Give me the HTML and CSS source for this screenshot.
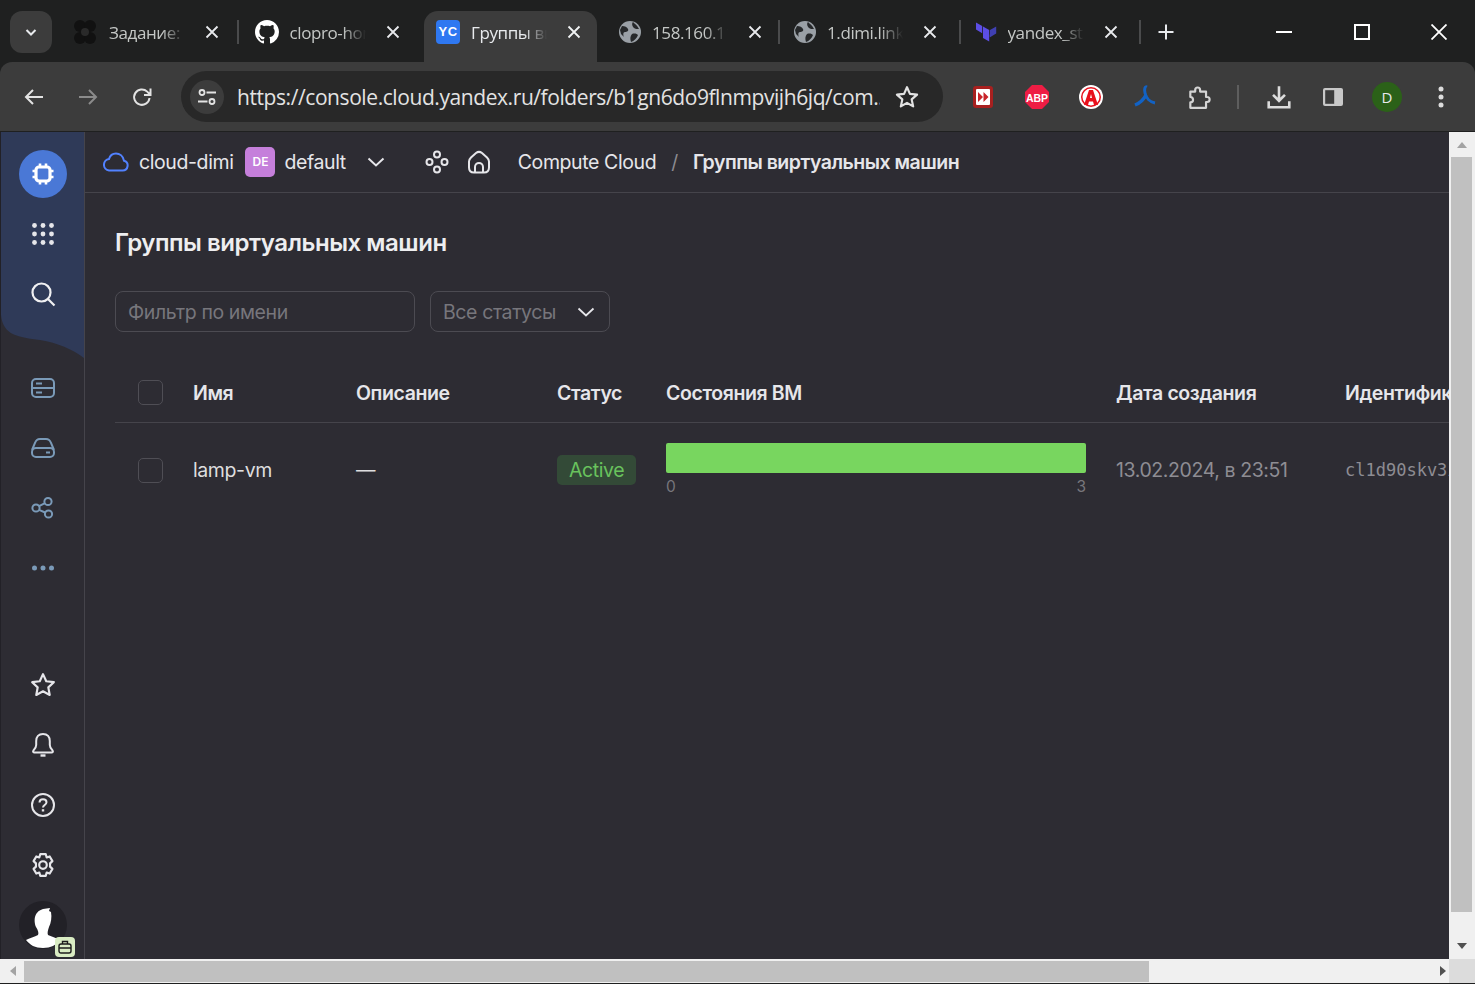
FILE: index.html
```html
<!DOCTYPE html>
<html lang="ru">
<head>
    <meta charset="UTF-8">
    <title>Группы виртуальных машин</title>
    <link rel="stylesheet" href="styles.css">
</head>
<body>
<div class="window">
    <!-- вкладки -->
    <div class="tabbar">
        <div class="tab-search">
            <svg width="14" height="14" viewBox="0 0 14 14"><path d="M2.5 5l4.5 4.5L11.500 5" fill="none" stroke="#e8eaed" stroke-width="2"/></svg>
        </div>
        <div class="tab">
            <svg class="favicon" width="26" height="26" viewBox="0 0 26 26" fill="#111"><circle cx="8" cy="7" r="6"/><circle cx="18" cy="7" r="6"/><circle cx="8" cy="19" r="6"/><circle cx="18" cy="19" r="6"/><circle cx="13" cy="13" r="4" fill="#2a2a2a"/></svg>
            <span class="tab-title">Задание: 1</span>
            <svg class="tab-close" width="14" height="14" viewBox="0 0 14 14"><path d="M1.500 1.500l11 11M12.500 1.500l-11 11" stroke="#e8eaed" stroke-width="1.800"/></svg>
        </div>
        <div class="tab sep">
            <svg class="favicon" width="24" height="24" viewBox="0 0 16 16"><path fill="#fff" d="M8 0C3.580 0 0 3.580 0 8c0 3.540 2.290 6.530 5.470 7.590.4.070.55-.17.55-.38 0-.19-.01-.82-.01-1.490-2.010.37-2.530-.49-2.690-.94-.09-.23-.48-.94-.82-1.130-.28-.15-.68-.52-.01-.53.63-.01 1.080.58 1.230.82.72 1.210 1.870.87 2.330.66.07-.52.28-.87.51-1.070-1.780-.2-3.640-.89-3.640-3.950 0-.87.31-1.590.82-2.150-.08-.2-.36-1.020.08-2.120 0 0 .67-.21 2.200.82.64-.18 1.320-.27 2-.27.68 0 1.360.09 2 .27 1.530-1.040 2.200-.82 2.200-.82.44 1.100.16 1.920.08 2.120.51.56.82 1.270.82 2.150 0 3.070-1.870 3.750-3.650 3.950.29.25.54.73.54 1.480 0 1.070-.01 1.930-.01 2.200 0 .21.15.46.55.38A8.013 8.013 0 0016 8c0-4.420-3.580-8-8-8z"/></svg>
            <span class="tab-title">clopro-hom</span>
            <svg class="tab-close" width="14" height="14" viewBox="0 0 14 14"><path d="M1.500 1.500l11 11M12.500 1.500l-11 11" stroke="#e8eaed" stroke-width="1.800"/></svg>
        </div>
        <div class="tab active">
            <span class="favicon yc-icon">YC</span>
            <span class="tab-title">Группы вир</span>
            <svg class="tab-close" width="14" height="14" viewBox="0 0 14 14"><path d="M1.500 1.500l11 11M12.500 1.500l-11 11" stroke="#f1f3f4" stroke-width="1.800"/></svg>
        </div>
        <div class="tab">
            <svg class="favicon" width="22" height="22" viewBox="0 0 22 22"><circle cx="11" cy="11" r="11" fill="#9aa0a6"/><path d="M3 5c3 0 5 1 6 3s-1 3-3 3-2 3-1 5l-3-3-1-4zM14 1c2 2 4 3 6 7-2 0-4 0-5-1s-3-4-1-6zM13 13c3-1 5 0 6 1-1 3-4 6-7 7-1-3-1-6 1-8z" fill="#26282a"/></svg>
            <span class="tab-title">158.160.118</span>
            <svg class="tab-close" width="14" height="14" viewBox="0 0 14 14"><path d="M1.500 1.500l11 11M12.500 1.500l-11 11" stroke="#e8eaed" stroke-width="1.800"/></svg>
        </div>
        <div class="tab">
            <svg class="favicon" width="22" height="22" viewBox="0 0 22 22"><circle cx="11" cy="11" r="11" fill="#9aa0a6"/><path d="M3 5c3 0 5 1 6 3s-1 3-3 3-2 3-1 5l-3-3-1-4zM14 1c2 2 4 3 6 7-2 0-4 0-5-1s-3-4-1-6zM13 13c3-1 5 0 6 1-1 3-4 6-7 7-1-3-1-6 1-8z" fill="#26282a"/></svg>
            <span class="tab-title">1.dimi.link</span>
            <svg class="tab-close" width="14" height="14" viewBox="0 0 14 14"><path d="M1.500 1.500l11 11M12.500 1.500l-11 11" stroke="#e8eaed" stroke-width="1.800"/></svg>
        </div>
        <div class="tab tab-last">
            <svg class="favicon" width="22" height="24" viewBox="0 0 22 24" fill="#5c4ee5"><path d="M8 6.500l6.200 3.600v7.100L8 13.600z"/><path d="M15 10.100v7.100l6.200-3.600V6.500z" fill="#4040b2"/><path d="M1 2.500v7.100l6.200 3.600V6.100zM8 18l6.200 3.600v-7.100L8 10.900z"/></svg>
            <span class="tab-title">yandex_sto</span>
            <svg class="tab-close" width="14" height="14" viewBox="0 0 14 14"><path d="M1.500 1.500l11 11M12.500 1.500l-11 11" stroke="#e8eaed" stroke-width="1.800"/></svg>
        </div>
        <div class="new-tab">
            <svg width="16" height="16" viewBox="0 0 16 16"><path d="M8 0.500v15M0.500 8h15" stroke="#e8eaed" stroke-width="2"/></svg>
        </div>
        <div class="win-controls">
            <svg width="16" height="16" viewBox="0 0 16 16"><path d="M0 8h16" stroke="#fff" stroke-width="2"/></svg>
            <svg width="16" height="16" viewBox="0 0 16 16"><rect x="1" y="1" width="14" height="14" fill="none" stroke="#fff" stroke-width="2"/></svg>
            <svg width="16" height="16" viewBox="0 0 16 16"><path d="M0.500 0.500l15 15M15.500 0.500l-15 15" stroke="#fff" stroke-width="1.800"/></svg>
        </div>
    </div>

    <!-- адресная строка -->
    <div class="toolbar">
        <div class="nav-btns">
            <svg width="24" height="24" viewBox="0 0 24 24"><path d="M21 12H4M11 5l-7 7 7 7" fill="none" stroke="#e3e3e3" stroke-width="2"/></svg>
            <svg width="24" height="24" viewBox="0 0 24 24"><path d="M3 12h17M13 5l7 7-7 7" fill="none" stroke="#8b8b8b" stroke-width="2"/></svg>
            <svg width="24" height="24" viewBox="0 0 24 24"><path d="M19.500 13a7.700 7.700 0 1 1-2.300-6.400L20 9.500M20.500 3.500v6.500H14" fill="none" stroke="#e3e3e3" stroke-width="2"/></svg>
        </div>
        <div class="omnibox">
            <span class="tune-btn">
                <svg width="20" height="20" viewBox="0 0 20 20" fill="none" stroke="#e3e3e3" stroke-width="1.800"><circle cx="5" cy="5.500" r="2.500"/><path d="M9.500 5.500H19M1 14.500h9.500"/><circle cx="15" cy="14.500" r="2.500"/></svg>
            </span>
            <span class="url">https://console.cloud.yandex.ru/folders/b1gn6do9flnmpvijh6jq/com...</span>
            <svg class="star" width="26" height="26" viewBox="0 0 24 24"><path d="M12 3l2.700 6.100 6.600.7-5 4.400 1.400 6.500-5.700-3.300-5.700 3.300 1.400-6.500-5-4.400 6.600-.7z" fill="none" stroke="#e3e3e3" stroke-width="2" stroke-linejoin="round"/></svg>
        </div>
        <div class="ext-list">
            <span class="ext">
                <svg width="24" height="24" viewBox="0 0 24 24"><rect x="2" y="1" width="20" height="22" rx="3" fill="#a8201f"/><rect x="5" y="4" width="14" height="16" rx="1" fill="#fff"/><path d="M7 7l5 5-5 5zM12.500 7l5 5-5 5z" fill="#c8242a"/></svg>
            </span>
            <span class="ext">
                <svg width="26" height="26" viewBox="0 0 26 26"><path d="M8 1h10l7 7v10l-7 7H8l-7-7V8z" fill="#ee1d44"/><text class="abp-text" x="13" y="17.500" text-anchor="middle">ABP</text></svg>
            </span>
            <span class="ext">
                <svg width="26" height="26" viewBox="0 0 26 26"><circle cx="13" cy="13" r="12" fill="#fff"/><circle cx="13" cy="13" r="10" fill="#e8101c"/><circle cx="13" cy="13" r="8.500" fill="#fff"/><path d="M6 21L11 6h4l5 15h-4l-1-3.500h-4L10 21zM12 14h2l-1-4z" fill="#e8101c"/></svg>
            </span>
            <span class="ext">
                <svg width="26" height="26" viewBox="0 0 26 26" fill="none" stroke="#1262c4" stroke-width="3"><path d="M15 3c-2-1-3 2-2 6 1 5 5 9 10 10"/><path d="M14 11c-2 4-6 8-11 10" stroke-width="3.500"/></svg>
            </span>
            <span class="ext">
                <svg width="26" height="26" viewBox="0 0 24 24"><path d="M4 7h4.500V5.500a2.200 2.200 0 0 1 4.500 0V7h5.500v5h1a2.300 2.300 0 0 1 0 4.600h-1V22H4v-5a2.500 2.500 0 0 0 0-5z" fill="none" stroke="#d4d4d4" stroke-width="2" stroke-linejoin="round"/></svg>
            </span>
            <span class="ext-sep"></span>
            <span class="ext">
                <svg width="26" height="26" viewBox="0 0 24 24"><path d="M12 2v13M6.500 10l5.500 5.500 5.500-5.500M2.500 16v5.500h19V16" fill="none" stroke="#dcdcdc" stroke-width="2.400"/></svg>
            </span>
            <span class="ext">
                <svg width="24" height="24" viewBox="0 0 24 24"><rect x="2" y="3" width="20" height="18" rx="2" fill="#c8c8c8"/><rect x="4.200" y="5.200" width="9" height="13.600" fill="#3c3c3c"/></svg>
            </span>
            <span class="ext"><span class="profile">D</span></span>
            <span class="ext">
                <svg width="6" height="22" viewBox="0 0 6 22" fill="#dcdcdc"><circle cx="3" cy="3" r="2.500"/><circle cx="3" cy="11" r="2.500"/><circle cx="3" cy="19" r="2.500"/></svg>
            </span>
        </div>
    </div>

    <div class="page">
        <div class="page-main">
            <!-- боковое меню -->
            <div class="sidebar">
                <svg class="sidebar-bg" width="83" height="226" viewBox="0 0 83 226" preserveAspectRatio="none"><path d="M0 0h83v226c-12-9-26-15-44-18C18 205 2 204 0 183z" fill="#2f3a58"/></svg>
                <div class="nav-item">
                    <span class="nav-active">
                        <svg width="24" height="24" viewBox="0 0 24 24"><rect x="5" y="5" width="14" height="14" rx="3" fill="none" stroke="#fff" stroke-width="3.200"/><path d="M9 1.500v3M15 1.500v3M9 19.500v3M15 19.500v3M1.500 9h3M1.500 15h3M19.500 9h3M19.500 15h3" stroke="#fff" stroke-width="2.600"/></svg>
                    </span>
                </div>
                <div class="nav-item">
                    <svg width="24" height="24" viewBox="0 0 24 24" fill="#e6e6ea"><circle cx="3.500" cy="3.500" r="2.400"/><circle cx="12" cy="3.500" r="2.400"/><circle cx="20.500" cy="3.500" r="2.400"/><circle cx="3.500" cy="12" r="2.400"/><circle cx="12" cy="12" r="2.400"/><circle cx="20.500" cy="12" r="2.400"/><circle cx="3.500" cy="20.500" r="2.400"/><circle cx="12" cy="20.500" r="2.400"/><circle cx="20.500" cy="20.500" r="2.400"/></svg>
                </div>
                <div class="nav-item">
                    <svg width="26" height="26" viewBox="0 0 26 26" fill="none" stroke="#f0f0f2" stroke-width="2.200"><circle cx="11.500" cy="11.500" r="9"/><path d="M18 18l6.500 6.500"/></svg>
                </div>
                <div class="nav-item nav-gap">
                    <svg width="24" height="20" viewBox="0 0 24 20" fill="none" stroke="#7a9ab8" stroke-width="2"><rect x="1" y="1" width="22" height="18" rx="4"/><path d="M1 10h22M5 5.500h6M5 14.500h6"/></svg>
                </div>
                <div class="nav-item">
                    <svg width="24" height="20" viewBox="0 0 24 20" fill="none" stroke="#7a9ab8" stroke-width="2"><path d="M1 12l3-7c1-3 3-4 5-4h6c2 0 4 1 5 4l3 7"/><rect x="1" y="10" width="22" height="9" rx="4"/><path d="M15 14.500h4"/></svg>
                </div>
                <div class="nav-item">
                    <svg width="24" height="24" viewBox="0 0 24 24" fill="none" stroke="#7a9ab8" stroke-width="2"><circle cx="5" cy="12" r="3.600"/><circle cx="17" cy="5.500" r="3.600"/><circle cx="17.500" cy="18" r="3.600"/><path d="M8 10.200l6-3M8 13.800l6.200 2.700"/></svg>
                </div>
                <div class="nav-item">
                    <svg width="24" height="6" viewBox="0 0 24 6" fill="#7a9ab8"><circle cx="3.500" cy="3" r="2.500"/><circle cx="12" cy="3" r="2.500"/><circle cx="20.500" cy="3" r="2.500"/></svg>
                </div>
                <div class="sidebar-spacer"></div>
                <div class="nav-item">
                    <svg width="26" height="26" viewBox="0 0 24 24"><path d="M12 2l3 6.500 7 .9-5.100 4.800 1.300 7L12 17.800l-6.200 3.400 1.300-7L2 9.400l7-.9z" fill="none" stroke="#e6e6ea" stroke-width="2" stroke-linejoin="round"/></svg>
                </div>
                <div class="nav-item">
                    <svg width="24" height="26" viewBox="0 0 24 26" fill="none" stroke="#e6e6ea" stroke-width="2"><path d="M12 2c-4.500 0-6.800 3-6.800 7v4c0 2.500-1.200 4-2.800 5.500-.8 1 0 2 1 2h17.200c1 0 1.800-1 1-2-1.600-1.500-2.800-3-2.800-5.500V9c0-4-2.300-7-6.800-7z"/><path d="M9.500 23.500h5" stroke-width="2.400"/></svg>
                </div>
                <div class="nav-item">
                    <svg width="24" height="24" viewBox="0 0 24 24" fill="none" stroke="#e6e6ea" stroke-width="2"><circle cx="12" cy="12" r="11"/><path d="M8.500 9.500c0-2 1.500-3.300 3.500-3.300s3.500 1.300 3.500 3c0 2.800-3.500 2.800-3.500 5.300"/><path d="M12 16.200v2.300" stroke-width="2.400"/></svg>
                </div>
                <div class="nav-item">
                    <svg width="26" height="26" viewBox="0 0 24 24" fill="none" stroke="#e6e6ea" stroke-width="2" stroke-linejoin="round"><circle cx="12" cy="12" r="3.500"/><path d="M9.500 2h5l.9 3 2.800-.9 2.500 4.300-2.200 2.100v3l2.200 2.100-2.500 4.300-2.800-.9-.9 3h-5l-.9-3-2.800.9-2.500-4.300L5.500 13.500v-3L3.300 8.400l2.500-4.300 2.800.9z"/></svg>
                </div>
                <div class="user-box">
                    <svg width="48" height="48" viewBox="0 0 48 48"><circle cx="24" cy="24" r="24" fill="#222127"/><path d="M24 8l7-1-1 3 2 1c1 5 0 11-2 15-1 3-2 6-1 8 4 2 9 3 12 5-4 5-9 8-17 8S11 44 7 39c3-2 9-3 12-5 1-2 0-5-2-8-2-5-3-15 7-18z" fill="#fff"/></svg>
                    <span class="user-badge">
                        <svg width="14" height="14" viewBox="0 0 14 14" fill="none" stroke="#1c1c1c" stroke-width="1.400"><rect x="1" y="4" width="12" height="9" rx="2"/><path d="M4.500 4V1.500h5V4M1 8h12"/></svg>
                    </span>
                </div>
            </div>

            <div class="content">
                <div class="breadcrumbs">
                    <svg width="26" height="20" viewBox="0 0 26 20" fill="none" stroke="#5282ff" stroke-width="2"><path d="M6 18.500h13.500a5 5 0 0 0 1.500-9.800C20 4 16.500 1.500 13 1.500 9.500 1.500 7 3.500 6 7a5.800 5.800 0 0 0 0 11.500z"/></svg>
                    <span class="crumb cloud-name">cloud-dimi</span>
                    <span class="folder-badge">DE</span>
                    <span class="crumb">default</span>
                    <svg class="crumb-chevron" width="18" height="10" viewBox="0 0 18 10"><path d="M1.500 1.500L9 8.500l7.500-7" fill="none" stroke="#e6e6ea" stroke-width="2"/></svg>
                    <svg class="crumb-graph" width="24" height="24" viewBox="0 0 24 24" fill="none" stroke="#e6e6ea" stroke-width="2"><circle cx="12" cy="4.500" r="3"/><circle cx="4.500" cy="12" r="3"/><circle cx="19.500" cy="12" r="3"/><circle cx="12" cy="19.500" r="3"/></svg>
                    <svg class="crumb-home" width="24" height="24" viewBox="0 0 24 24" fill="none" stroke="#e6e6ea" stroke-width="2"><path d="M2 11.500c0-2 1-3 2-4l5-4.500c2-1.500 4-1.500 6 0l5 4.500c1 1 2 2 2 4v6c0 3-2 5-5 5H7c-3 0-5-2-5-5z"/><path d="M8 22.500v-5.500c0-2.500 2-4 4-4s4 1.500 4 4v5.500"/></svg>
                    <span class="crumb crumb-service">Compute Cloud</span>
                    <span class="crumb-slash">/</span>
                    <span class="crumb crumb-current">Группы виртуальных машин</span>
                </div>

                <div class="page-body">
                    <h1 class="page-title">Группы виртуальных машин</h1>
                    <div class="filters">
                        <div class="field field-name">Фильтр по имени</div>
                        <div class="field field-status">
                            <span>Все статусы</span>
                            <svg width="18" height="10" viewBox="0 0 18 10"><path d="M1.500 1.500L9 8.500l7.500-7" fill="none" stroke="#e6e6ea" stroke-width="1.800"/></svg>
                        </div>
                    </div>

                    <div class="table-row table-head">
                        <span><span class="checkbox"></span></span>
                        <span>Имя</span>
                        <span>Описание</span>
                        <span>Статус</span>
                        <span>Состояния ВМ</span>
                        <span>Дата создания</span>
                        <span>Идентификатор</span>
                    </div>
                    <div class="table-row table-body">
                        <span><span class="checkbox"></span></span>
                        <span class="vm-name">lamp-vm</span>
                        <span class="vm-desc">—</span>
                        <span><span class="status-badge">Active</span></span>
                        <span class="vm-states">
                            <span class="states-bar"></span>
                            <span class="states-scale"><span>0</span><span>3</span></span>
                        </span>
                        <span class="vm-date">13.02.2024, в 23:51</span>
                        <span class="vm-id">cl1d90skv3ikhq0m</span>
                    </div>
                </div>
            </div>

            <!-- вертикальная прокрутка -->
            <div class="vscroll">
                <span class="arrow arrow-up"></span>
                <span class="vscroll-thumb"></span>
                <span class="arrow arrow-down"></span>
            </div>
        </div>

        <!-- горизонтальная прокрутка -->
        <div class="hscroll">
            <span class="arrow arrow-left"></span>
            <span class="hscroll-thumb"></span>
            <span class="arrow arrow-right"></span>
            <span class="hscroll-corner"></span>
        </div>
    </div>
</div>
</body>
</html>
```

FILE: styles.css
```css
* {
    box-sizing: border-box;
}
html, body {
    margin: 0;
    height: 100%;
    overflow: hidden;
}
body {
    font-family: Inter, "Noto Sans", sans-serif;
    background-color: #1f2020;
}
.window {
    width: 1475px;
    height: 984px;
    display: flex;
    flex-direction: column;
}

/* вкладки */
.tabbar {
    height: 62px;
    flex: none;
    display: flex;
    background-color: #1f2020;
    padding-left: 10px;
    padding-top: 11px;
    font-family: "Open Sans", sans-serif;
}
.tab-search {
    width: 42px;
    height: 42px;
    border-radius: 12px;
    background-color: #3c3c3c;
    display: flex;
    align-items: center;
    justify-content: center;
    margin-right: 6px;
}
.tab {
    width: 180.5px;
    height: 42px;
    display: flex;
    align-items: center;
    padding-left: 14px;
    position: relative;
    color: #c4c7c5;
    font-size: 17px;
    letter-spacing: -0.4px;
}
.tab.sep {
    padding-left: 16px;
}
.tab::after {
    content: "";
    position: absolute;
    right: 0;
    top: 9px;
    height: 24px;
    width: 2px;
    background-color: #4a4b4c;
}
.tab.sep::after {
    display: none;
}
.tab.active {
    height: 51px;
    margin: 0 5px;
    width: 173px;
    padding-left: 12px;
    padding-bottom: 9px;
    background-color: #3c3c3c;
    border-radius: 14px 14px 0 0;
    color: #e8eaed;
}
.tab.active::after {
    display: none;
}
.tab.active + .tab {
    padding-left: 17px;
    width: 178px;
}
.favicon {
    flex: none;
    margin-right: 11px;
}
.yc-icon {
    width: 24px;
    height: 24px;
    margin-right: 11px;
    border-radius: 4px;
    background-color: #2f78f1;
    color: #fff;
    font-family: "Liberation Sans", sans-serif;
    font-size: 13px;
    font-weight: 700;
    letter-spacing: 0.5px;
    text-align: center;
    line-height: 24px;
}
.tab-title {
    width: 76px;
    overflow: hidden;
    white-space: nowrap;
    -webkit-mask-image: linear-gradient(to right, #000 70%, transparent 100%);
    mask-image: linear-gradient(to right, #000 70%, transparent 100%);
}
.tab-close {
    margin-left: 20px;
    flex: none;
}
.new-tab {
    margin-left: 17px;
    height: 42px;
    display: flex;
    align-items: center;
}
.win-controls {
    margin-left: auto;
    height: 42px;
    width: 171px;
    margin-right: 28px;
    display: flex;
    align-items: center;
    justify-content: space-between;
}

/* адресная строка */
.toolbar {
    height: 69px;
    flex: none;
    display: flex;
    background-color: #3c3c3c;
    border-radius: 12px 12px 0 0;
    padding: 9px 0 8px 22px;
}
.nav-btns {
    width: 159px;
    display: flex;
    align-items: center;
    gap: 30px;
}
.omnibox {
    width: 762px;
    height: 51px;
    border-radius: 26px;
    background-color: #282828;
    display: flex;
    align-items: center;
    padding-left: 9px;
}
.tune-btn {
    width: 34px;
    height: 34px;
    border-radius: 50%;
    background-color: #3c3c3c;
    display: flex;
    align-items: center;
    justify-content: center;
    flex: none;
}
.url {
    margin-left: 13px;
    width: 643px;
    white-space: nowrap;
    overflow: hidden;
    color: #e3e3e3;
    font-family: "Open Sans", sans-serif;
    font-size: 21px;
    letter-spacing: -0.42px;
}
.star {
    margin-left: 14px;
    flex: none;
}
.ext-list {
    display: flex;
    align-items: center;
    margin-left: 13px;
}
.ext {
    width: 54px;
    height: 40px;
    display: flex;
    align-items: center;
    justify-content: center;
    flex: none;
}
.ext-sep {
    width: 2px;
    height: 24px;
    background-color: #5e5e5e;
    margin: 0 13px 0 11px;
    flex: none;
}
.abp-text {
    font-family: "Liberation Sans", sans-serif;
    font-size: 10.500px;
    font-weight: 700;
    fill: #fff;
}
.profile {
    width: 30px;
    height: 30px;
    border-radius: 50%;
    background-color: #2b6118;
    color: #e8eaed;
    font-family: "Open Sans", sans-serif;
    font-size: 15px;
    line-height: 30px;
    text-align: center;
}

/* страница */
.page {
    flex: 1;
    min-height: 0;
    display: flex;
    flex-direction: column;
    border-top: 1px solid #1f2020;
    padding-bottom: 1px;
}
.page-main {
    flex: 1;
    min-height: 0;
    display: flex;
    background-color: #2d2c33;
}
.sidebar {
    width: 85px;
    flex: none;
    position: relative;
    display: flex;
    flex-direction: column;
    border-right: 1px solid #45444b;
    border-left: 1px solid #222127;
    padding-top: 12px;
    padding-bottom: 10px;
}
.sidebar-bg {
    position: absolute;
    left: 0;
    top: 0;
}
.nav-item {
    height: 60px;
    flex: none;
    display: flex;
    align-items: center;
    justify-content: center;
    position: relative;
}
.nav-active {
    width: 48px;
    height: 48px;
    border-radius: 50%;
    background-color: #4a78d6;
    display: flex;
    align-items: center;
    justify-content: center;
}
.nav-gap {
    margin-top: 34px;
}
.sidebar-spacer {
    flex: 1;
}
.user-box {
    height: 48px;
    width: 48px;
    margin: 6px 0 0 18px;
    position: relative;
    flex: none;
}
.user-badge {
    position: absolute;
    right: -8px;
    bottom: -8px;
    width: 20px;
    height: 20px;
    border-radius: 4px;
    background-color: #d9ecc3;
    display: flex;
    align-items: center;
    justify-content: center;
}

/* контент */
.content {
    flex: 1;
    min-width: 0;
    overflow: hidden;
}
.breadcrumbs {
    height: 61px;
    display: flex;
    align-items: center;
    padding-left: 18px;
    border-bottom: 1px solid #45444b;
    color: #e6e6ea;
    font-size: 19.5px;
    letter-spacing: -0.4px;
    white-space: nowrap;
}
.cloud-name {
    margin-left: 10px;
}
.folder-badge {
    width: 30px;
    height: 30px;
    margin: 0 9px 0 12px;
    border-radius: 5px;
    background-color: #c57fdb;
    color: #fff;
    font-size: 12px;
    font-weight: 600;
    line-height: 30px;
    text-align: center;
    letter-spacing: 0;
}
.crumb-chevron {
    margin-left: 21px;
}
.crumb-graph {
    margin-left: 40px;
}
.crumb-home {
    margin-left: 18px;
}
.crumb-service {
    margin-left: 27px;
}
.crumb-slash {
    margin: 0 15px;
    color: #8b8a90;
}
.crumb-current {
    font-weight: 600;
    letter-spacing: -0.5px;
}
.page-body {
    padding: 0 0 0 30px;
}
.page-title {
    margin: 33px 0 0;
    height: 34px;
    line-height: 34px;
    color: #eeeef0;
    font-size: 24px;
    font-weight: 600;
    letter-spacing: -0.45px;
    white-space: nowrap;
}
.filters {
    display: flex;
    gap: 15px;
    margin-top: 31px;
}
.field {
    height: 41px;
    border: 1px solid #4c4b52;
    border-radius: 8px;
    color: #77767c;
    font-size: 19.5px;
    letter-spacing: -0.4px;
    display: flex;
    align-items: center;
    padding-left: 12px;
}
.field-name {
    width: 300px;
}
.field-status {
    width: 180px;
    justify-content: space-between;
    padding-right: 14px;
}
.table-row {
    display: grid;
    grid-template-columns: 78px 163px 201px 109px 450px 229px 300px;
    align-items: center;
    white-space: nowrap;
}
.table-head {
    height: 91px;
    border-bottom: 1px solid #45444b;
    color: #e6e6ea;
    font-size: 19.5px;
    font-weight: 600;
    letter-spacing: -0.4px;
    padding-top: 31px;
}
.table-body {
    height: 94px;
    font-size: 19.5px;
    letter-spacing: -0.4px;
    color: #dededf;
}
.checkbox {
    display: block;
    width: 25px;
    height: 25px;
    margin-left: 23px;
    border: 1px solid #4f4e55;
    border-radius: 5px;
}
.status-badge {
    display: inline-block;
    width: 79px;
    height: 30px;
    line-height: 30px;
    text-align: center;
    border-radius: 5px;
    background-color: #334a37;
    color: #69c35d;
}
.vm-states {
    width: 420px;
    display: block;
    margin-top: 1px;
}
.states-bar {
    display: block;
    height: 30px;
    border-radius: 2px;
    background-color: #78d65f;
}
.states-scale {
    display: flex;
    justify-content: space-between;
    height: 26px;
    line-height: 28px;
    color: #77767c;
    font-size: 15.500px;
    letter-spacing: 0;
}
.vm-date {
    color: #8e8d93;
}
.vm-id {
    color: #8e8d93;
    font-family: "DejaVu Sans Mono", monospace;
    font-size: 17px;
    letter-spacing: 0;
}

/* полосы прокрутки */
.vscroll {
    width: 26px;
    flex: none;
    background-color: #f0f0f0;
    display: flex;
    flex-direction: column;
    align-items: center;
    padding: 0 1px 0 0;
}
.vscroll-thumb {
    flex: 1;
    width: 21px;
    background-color: #c0c0c0;
    margin: 9px 0 31px;
}
.hscroll {
    height: 24px;
    flex: none;
    display: flex;
    align-items: center;
    background-color: #f0f0f0;
}
.hscroll-thumb {
    width: 1125px;
    height: 21px;
    margin-left: 8px;
    background-color: #c0c0c0;
}
.hscroll-corner {
    width: 26px;
    height: 24px;
    background-color: #dcdcdc;
    margin-left: 3px;
}
.arrow {
    width: 0;
    height: 0;
    flex: none;
    border-style: solid;
    border-color: transparent;
}
.arrow-up {
    margin-top: 10px;
    border-width: 0 5.500px 6px;
    border-bottom-color: #a3a3a3;
}
.arrow-down {
    margin-bottom: 10px;
    border-width: 6px 5.500px 0;
    border-top-color: #505050;
}
.arrow-left {
    margin-left: 10px;
    border-width: 5.500px 6px 5.500px 0;
    border-right-color: #a3a3a3;
}
.arrow-right {
    margin-left: auto;
    border-width: 5.500px 0 5.500px 6px;
    border-left-color: #505050;
}
```
